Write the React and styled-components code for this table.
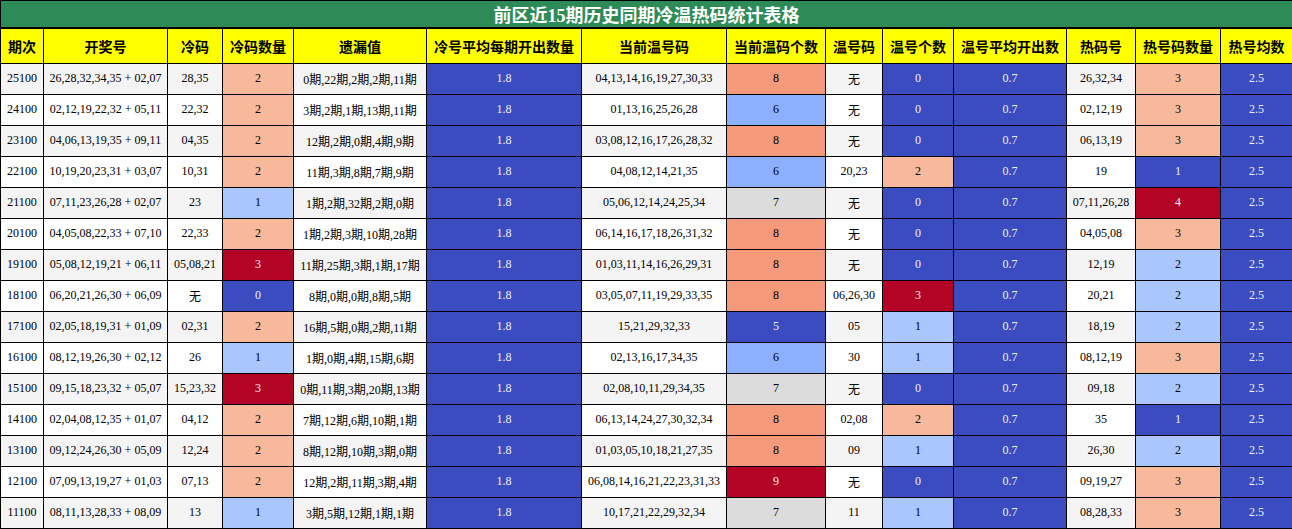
import React from "react";
import styled, { createGlobalStyle } from "styled-components";

const Global = createGlobalStyle`
  html, body { margin: 0; padding: 0; background: #ffffff; }
  body { font-family: "Liberation Serif", "Noto Sans CJK SC", serif; }
`;

const ANCHORS = [
  [0, [59, 76, 192]],
  [0.25, [141, 176, 254]],
  [1 / 3, [170, 199, 253]],
  [0.5, [221, 220, 220]],
  [2 / 3, [247, 184, 156]],
  [0.75, [244, 154, 123]],
  [1, [180, 4, 38]],
];

function coolwarm(t) {
  for (let i = 0; i < ANCHORS.length - 1; i++) {
    const [t0, c0] = ANCHORS[i];
    const [t1, c1] = ANCHORS[i + 1];
    if (t <= t1 + 1e-9) {
      const f = t1 === t0 ? 0 : (t - t0) / (t1 - t0);
      return c0.map((v, k) => Math.round(v + (c1[k] - v) * f));
    }
  }
  return ANCHORS[ANCHORS.length - 1][1];
}

function lum([r, g, b]) {
  const f = (x) => {
    x /= 255;
    return x <= 0.03928 ? x / 12.92 : Math.pow((x + 0.055) / 1.055, 2.4);
  };
  return 0.2126 * f(r) + 0.7152 * f(g) + 0.0722 * f(b);
}

const COLS = [
  { h: "期次", w: 43 },
  { h: "开奖号", w: 124 },
  { h: "冷码", w: 55 },
  { h: "冷码数量", w: 71, grad: [0, 3] },
  { h: "遗漏值", w: 133 },
  { h: "冷号平均每期开出数量", w: 155, grad: [0, 0] },
  { h: "当前温号码", w: 145 },
  { h: "当前温码个数", w: 99, grad: [5, 9] },
  { h: "温号码", w: 57 },
  { h: "温号个数", w: 71, grad: [0, 3] },
  { h: "温号平均开出数", w: 113, grad: [0, 0] },
  { h: "热码号", w: 69 },
  { h: "热号码数量", w: 85, grad: [1, 4] },
  { h: "热号均数", w: 72, grad: [0, 0] },
];

const RAW = `25100|26,28,32,34,35 + 02,07|28,35|2|0期,22期,2期,2期,11期|1.8|04,13,14,16,19,27,30,33|8|无|0|0.7|26,32,34|3|2.5
24100|02,12,19,22,32 + 05,11|22,32|2|3期,2期,1期,13期,11期|1.8|01,13,16,25,26,28|6|无|0|0.7|02,12,19|3|2.5
23100|04,06,13,19,35 + 09,11|04,35|2|12期,2期,0期,4期,9期|1.8|03,08,12,16,17,26,28,32|8|无|0|0.7|06,13,19|3|2.5
22100|10,19,20,23,31 + 03,07|10,31|2|11期,3期,8期,7期,9期|1.8|04,08,12,14,21,35|6|20,23|2|0.7|19|1|2.5
21100|07,11,23,26,28 + 02,07|23|1|1期,2期,32期,2期,0期|1.8|05,06,12,14,24,25,34|7|无|0|0.7|07,11,26,28|4|2.5
20100|04,05,08,22,33 + 07,10|22,33|2|1期,2期,3期,10期,28期|1.8|06,14,16,17,18,26,31,32|8|无|0|0.7|04,05,08|3|2.5
19100|05,08,12,19,21 + 06,11|05,08,21|3|11期,25期,3期,1期,17期|1.8|01,03,11,14,16,26,29,31|8|无|0|0.7|12,19|2|2.5
18100|06,20,21,26,30 + 06,09|无|0|8期,0期,0期,8期,5期|1.8|03,05,07,11,19,29,33,35|8|06,26,30|3|0.7|20,21|2|2.5
17100|02,05,18,19,31 + 01,09|02,31|2|16期,5期,0期,2期,11期|1.8|15,21,29,32,33|5|05|1|0.7|18,19|2|2.5
16100|08,12,19,26,30 + 02,12|26|1|1期,0期,4期,15期,6期|1.8|02,13,16,17,34,35|6|30|1|0.7|08,12,19|3|2.5
15100|09,15,18,23,32 + 05,07|15,23,32|3|0期,11期,3期,20期,13期|1.8|02,08,10,11,29,34,35|7|无|0|0.7|09,18|2|2.5
14100|02,04,08,12,35 + 01,07|04,12|2|7期,12期,6期,10期,1期|1.8|06,13,14,24,27,30,32,34|8|02,08|2|0.7|35|1|2.5
13100|09,12,24,26,30 + 05,09|12,24|2|8期,12期,10期,3期,0期|1.8|01,03,05,10,18,21,27,35|8|09|1|0.7|26,30|2|2.5
12100|07,09,13,19,27 + 01,03|07,13|2|12期,2期,11期,3期,4期|1.8|06,08,14,16,21,22,23,31,33|9|无|0|0.7|09,19,27|3|2.5
11100|08,11,13,28,33 + 08,09|13|1|3期,5期,12期,1期,1期|1.8|10,17,21,22,29,32,34|7|11|1|0.7|08,28,33|3|2.5`;

const ROWS = RAW.split("\n").map((l) => l.split("|"));

const Table = styled.table`
  width: 1292px;
  table-layout: fixed;
  border-collapse: collapse;
  border: 1px solid #000;
`;

const TitleRow = styled.tr`
  height: 27px;
`;

const HeadRow = styled.tr`
  height: 35px;
`;

const BodyRow = styled.tr`
  height: 31px;
  background: ${(p) => (p.$alt ? "#f4f4f4" : "#ffffff")};
`;

const TitleCell = styled.th`
  background: #2e8b57;
  color: #ffffff;
  font-size: 18px;
  font-weight: bold;
  text-align: center;
  padding: 0;
  border: 1px solid #000;
  border-bottom-width: 2px;
`;

const HeadCell = styled.th`
  background: #ffff00;
  color: #000;
  font-size: 14px;
  font-weight: bold;
  text-align: center;
  padding: 0;
  border: 1px solid #000;
  white-space: nowrap;
`;

const Cell = styled.td`
  font-size: 12px;
  text-align: center;
  padding: 0;
  border: 1px solid #000;
  white-space: nowrap;
  color: ${(p) => p.$fg || "#000"};
  background: ${(p) => p.$bg || "transparent"};
`;

function cellColors(col, value) {
  if (!col.grad) return {};
  const [lo, hi] = col.grad;
  const v = parseFloat(value);
  const t = hi === lo ? 0 : (v - lo) / (hi - lo);
  const c = coolwarm(t);
  const fg = lum(c) < 0.408 ? "#f1f1f1" : "#000000";
  return { bg: `rgb(${c[0]},${c[1]},${c[2]})`, fg };
}

export default function App() {
  return (
    <>
      <Global />
      <Table>
        <colgroup>
          {COLS.map((c) => (
            <col key={c.h} style={{ width: c.w }} />
          ))}
        </colgroup>
        <thead>
          <TitleRow>
            <TitleCell colSpan={14}>前区近15期历史同期冷温热码统计表格</TitleCell>
          </TitleRow>
          <HeadRow>
            {COLS.map((c) => (
              <HeadCell key={c.h}>{c.h}</HeadCell>
            ))}
          </HeadRow>
        </thead>
        <tbody>
          {ROWS.map((r, i) => (
            <BodyRow key={r[0]} $alt={i % 2 === 0}>
              {r.map((v, j) => {
                const { bg, fg } = cellColors(COLS[j], v);
                return (
                  <Cell key={j} $bg={bg} $fg={fg}>
                    {v}
                  </Cell>
                );
              })}
            </BodyRow>
          ))}
        </tbody>
      </Table>
    </>
  );
}
